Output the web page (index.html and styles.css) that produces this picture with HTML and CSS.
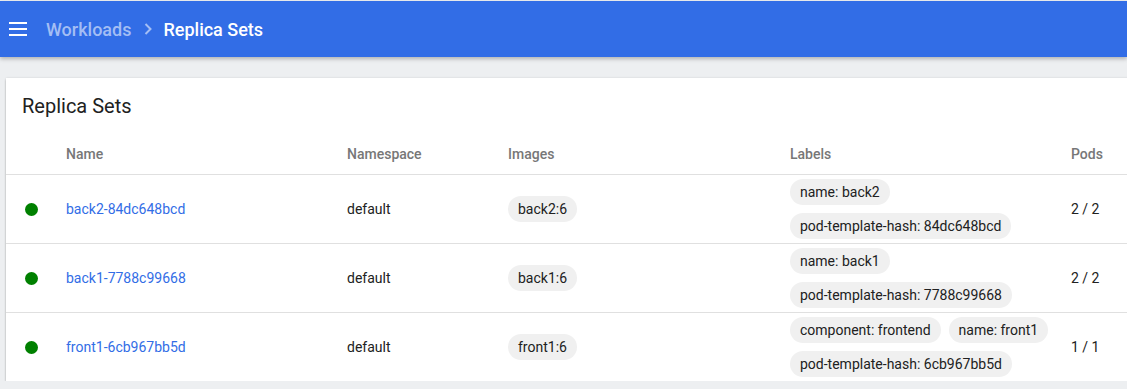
FILE: index.html
```html
<!DOCTYPE html>
<html lang="en">
<head>
  <meta charset="UTF-8">
  <meta name="viewport" content="width=device-width, initial-scale=1.0">
  <title>Replica Sets</title>
  <link rel="stylesheet" href="styles.css">
</head>
<body>

<header class="toolbar">
  <button class="menu-btn" aria-label="Menu">
    <svg width="18" height="14" viewBox="0 0 18 14">
      <rect x="0" y="0" width="18" height="2" fill="#fff"/>
      <rect x="0" y="6" width="18" height="2" fill="#fff"/>
      <rect x="0" y="12" width="18" height="2" fill="#fff"/>
    </svg>
  </button>
  <nav class="breadcrumbs">
    <a class="crumb" href="#">Workloads</a>
    <svg class="chevron" width="8" height="12" viewBox="0 0 8 12">
      <path d="M1.5 1 L6.5 6 L1.5 11" fill="none" stroke="#a4bef4" stroke-width="2"/>
    </svg>
    <span class="crumb current">Replica Sets</span>
  </nav>
</header>

<main class="content">
  <section class="card">
    <h2 class="card-title">Replica Sets</h2>

    <div class="table">
      <div class="row head">
        <div class="cell"></div>
        <div class="cell">Name</div>
        <div class="cell">Namespace</div>
        <div class="cell">Images</div>
        <div class="cell">Labels</div>
        <div class="cell">Pods</div>
      </div>

      <div class="row">
        <div class="cell"><span class="status ok"></span></div>
        <div class="cell"><a class="name-link" href="#">back2-84dc648bcd</a></div>
        <div class="cell">default</div>
        <div class="cell chips"><span class="chip">back2:6</span></div>
        <div class="cell chips">
          <span class="chip">name: back2</span>
          <span class="chip">pod-template-hash: 84dc648bcd</span>
        </div>
        <div class="cell">2 / 2</div>
      </div>

      <div class="row">
        <div class="cell"><span class="status ok"></span></div>
        <div class="cell"><a class="name-link" href="#">back1-7788c99668</a></div>
        <div class="cell">default</div>
        <div class="cell chips"><span class="chip">back1:6</span></div>
        <div class="cell chips">
          <span class="chip">name: back1</span>
          <span class="chip">pod-template-hash: 7788c99668</span>
        </div>
        <div class="cell">2 / 2</div>
      </div>

      <div class="row">
        <div class="cell"><span class="status ok"></span></div>
        <div class="cell"><a class="name-link" href="#">front1-6cb967bb5d</a></div>
        <div class="cell">default</div>
        <div class="cell chips"><span class="chip">front1:6</span></div>
        <div class="cell chips">
          <span class="chip">component: frontend</span>
          <span class="chip">name: front1</span>
          <span class="chip">pod-template-hash: 6cb967bb5d</span>
        </div>
        <div class="cell">1 / 1</div>
      </div>
    </div>
  </section>
</main>

</body>
</html>
```

FILE: styles.css
```css
body {
  font-family: Roboto, "Liberation Sans", Arial, sans-serif;
  background-color: #edeff1;
  margin: 0;
  padding-top: 1px;
  overflow: hidden;
  color: #212121;
}

.toolbar {
  background-color: #326de6;
  height: 56px;
  display: flex;
  align-items: center;
  padding-left: 9px;
  box-shadow: 0 2px 4px rgba(0, 0, 0, 0.25);
}

.menu-btn {
  background: none;
  border: none;
  padding: 0;
  margin: 0 19px 0 0;
  display: flex;
  cursor: pointer;
}

.breadcrumbs {
  display: flex;
  align-items: center;
  font-size: 18px;
  font-weight: 500;
}

.crumb {
  color: #a4bef4;
  text-decoration: none;
}

.crumb.current {
  color: #ffffff;
}

.chevron {
  margin: 0 11px 0 13px;
}

.content {
  padding: 21px 0 0 6px;
  width: 1140px;
}

.card {
  background-color: #ffffff;
  box-shadow: 0 2px 2px rgba(0, 0, 0, 0.24), 0 0 2px rgba(0, 0, 0, 0.12);
}

.card-title {
  margin: 0;
  padding: 0 16px;
  height: 56px;
  line-height: 56px;
  font-size: 20px;
  font-weight: 400;
  color: #212121;
}

.row {
  display: grid;
  grid-template-columns: 60px 281px 161px 282px 281px 1fr;
  align-items: center;
  min-height: 68px;
  border-top: 1px solid #e0e0e0;
  font-size: 14px;
}

.row.head {
  border-top: none;
  min-height: 40px;
  color: #777777;
  font-weight: 500;
}

.cell.chips {
  display: flex;
  flex-wrap: wrap;
  gap: 8px;
  padding: 4px 0;
}

.chip {
  display: inline-block;
  background-color: #f0f0f0;
  border-radius: 13px;
  height: 26px;
  line-height: 26px;
  padding: 0 10px;
  font-size: 14px;
  color: #212121;
}

.status {
  display: block;
  width: 13px;
  height: 13px;
  border-radius: 50%;
  margin-left: 19px;
}

.status.ok {
  background-color: #008000;
}

.name-link {
  color: #326de6;
  text-decoration: none;
}
```
